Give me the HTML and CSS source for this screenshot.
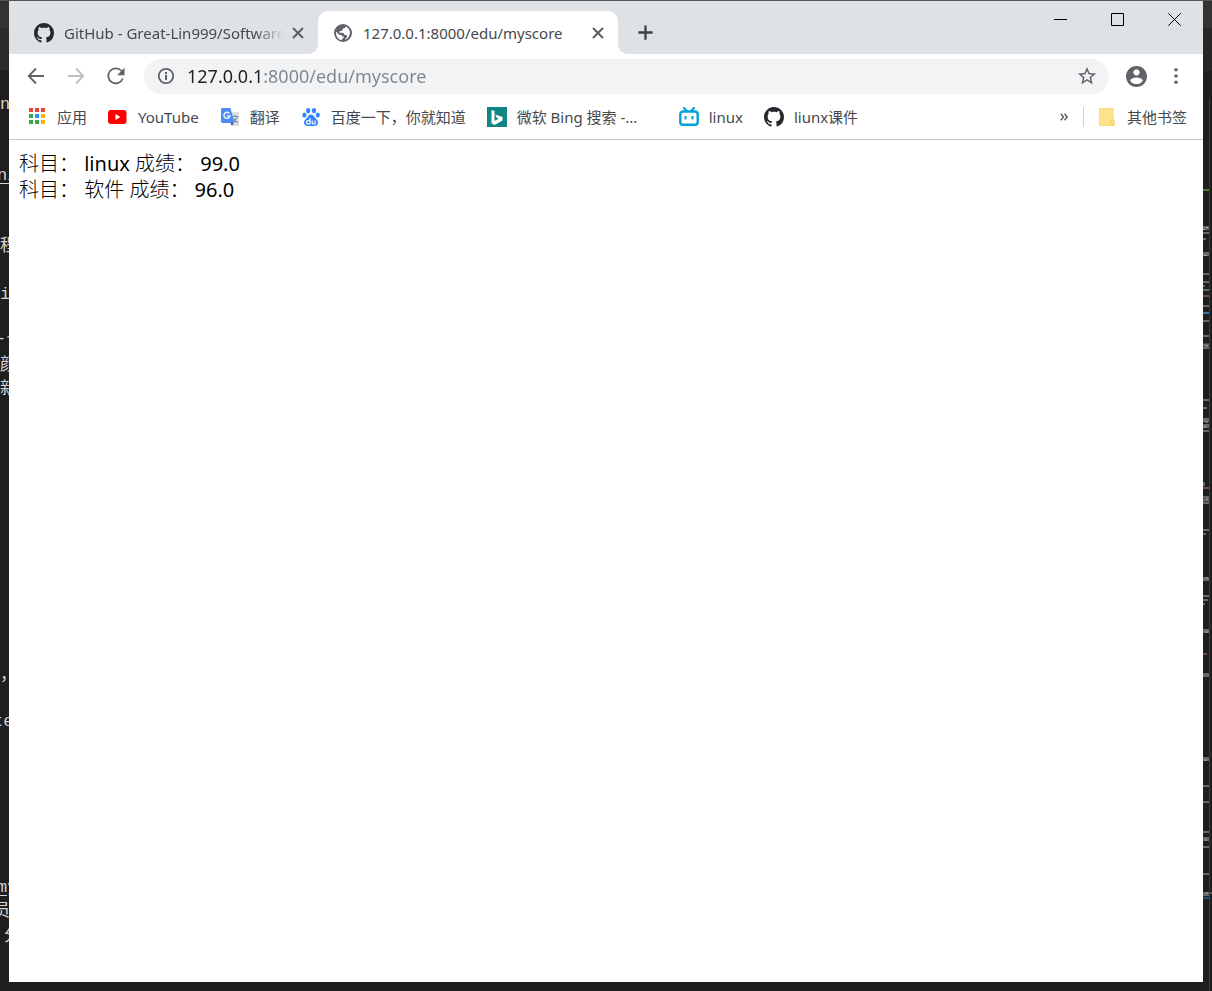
FILE: index.html
```
<!DOCTYPE html>
<html lang="zh-CN">
<head>
<meta charset="utf-8">
<title>127.0.0.1:8000/edu/myscore</title>
<link rel="stylesheet" href="styles.css">
</head>
<body>
<svg class="symbols" aria-hidden="true">
  <symbol id="github" viewBox="0 0 16 16"><path d="M8 0C3.58 0 0 3.58 0 8c0 3.54 2.29 6.53 5.47 7.59.4.07.55-.17.55-.38 0-.19-.01-.82-.01-1.49-2.01.37-2.53-.49-2.69-.94-.09-.23-.48-.94-.82-1.13-.28-.15-.68-.52-.01-.53.63-.01 1.08.58 1.23.82.72 1.21 1.87.87 2.33.66.07-.52.28-.87.51-1.07-1.78-.2-3.64-.89-3.64-3.95 0-.87.31-1.59.82-2.15-.08-.2-.36-1.02.08-2.12 0 0 .67-.21 2.2.82.64-.18 1.32-.27 2-.27.68 0 1.36.09 2 .27 1.53-1.04 2.2-.82 2.2-.82.44 1.1.16 1.92.08 2.12.51.56.82 1.27.82 2.15 0 3.07-1.87 3.75-3.65 3.95.29.25.54.73.54 1.48 0 1.07-.01 1.93-.01 2.2 0 .21.15.46.55.38A8.013 8.013 0 0016 8c0-4.42-3.58-8-8-8z"/></symbol>
  <symbol id="cross" viewBox="0 0 20 20"><path d="M5 5l10 10M15 5L5 15" fill="none" stroke="currentColor" stroke-width="1.900"/></symbol>
</svg>

<div class="editor" aria-hidden="true">
  <div class="code">
    <span class="line" style="top:93px">n</span>
    <span class="line link" style="top:164px">n/</span>
    <span class="line" style="top:235px">程</span>
    <span class="line" style="top:283px">i</span>
    <span class="line dashes" style="top:327px">-~</span>
    <span class="line" style="top:354px">颜</span>
    <span class="line" style="top:378px">新</span>
    <span class="line" style="top:664px">，</span>
    <span class="line shifted" style="top:710px">te</span>
    <span class="line link" style="top:876px">my</span>
    <span class="line shifted" style="top:900px">员</span>
    <span class="line indented" style="top:925px">分</span>
  </div>
  <svg class="minimap" viewBox="0 0 9 991" width="9" height="991">
    <path d="M0 0h9v27H0z" fill="#333"/><path d="M0 27h9v43H0z" fill="#262626"/>
    <path d="M6.500 98v893" stroke="#3a3a3a"/>
    <g fill="none" stroke="#686868">
      <path d="M0 227h6M0 253h6M0 483h2M0 419h6M0 425h6M0 578h6M0 630h6M0 674h6M0 758h6M0 838h6M0 893h6" stroke-width="4"/>
      <path d="M0 232h6M0 238h3M0 273h6M0 281h6M0 285h2M0 289h6M0 305h6M0 320h6M0 335h6M0 347h6M0 399h6M0 407h4M0 430h6M0 496h6M0 502h6M0 529h6M0 533h3M0 595h6M0 599h5M0 603h2M0 785h6M0 801h6M0 831h6M0 846h6M0 873h6" stroke-width="2"/>
      <path d="M0 344h6M0 499h6" stroke-width="3"/>
      <path d="M0 228.500h2M3 226.500h2M1 254.500h3M2 421h3M1 426h2M3 577h2M2 631h3M1 759h3M2 839h2M3 892h2M2 345h3M3 498h2" stroke="#aaa"/>
    </g>
    <path d="M0 189h6" stroke="#4d7a38" stroke-width="2"/>
    <path d="M0 295h6M0 487h6M0 653h4" stroke="#7c4a3e" stroke-width="2"/>
    <path d="M0 312h6" stroke="#3374a8" stroke-width="2"/><path d="M0 897h6" stroke="#264f78" stroke-width="2"/>
    <path d="M7 892h2" stroke="#999"/>
  </svg>
</div>

<div class="window">
  <header class="tabstrip">
    <nav class="tabs" aria-label="标签页">
      <div class="tab">
        <svg class="icon ghost"><use href="#github"/></svg>
        <a class="tab-title faded" href="#">GitHub - Great-Lin999/Software</a>
        <button class="tab-close" aria-label="关闭 GitHub"><svg class="icon"><use href="#cross"/></svg></button>
      </div>
      <div class="tab active">
        <svg class="icon" viewBox="2 2 20 20"><path fill="#5f6368" d="M12 3a9 9 0 1 0 0 18 9 9 0 0 0 0-18zm-1 16.200C7.500 18.700 5 15.700 5 12l.2-1.300L8.500 14H11v1.500h1.800v1.300L11 18zM17.200 16.500c-1 1.300-2.200 2-3.500 2.400l2.300-3.100c.5-.7 0-1.800-.9-1.800h-1.600c-.3-1.500-1.200-2.300-2.700-2.300H8.300c0-1.200.8-1.900 2-1.900.9 0 1.400-.5 1.400-1.400 0-.8.5-1.200 1.300-1.200 1 0 1.600-.8 1.600-1.700 4.600 1.800 5.700 7.300 2.600 11z"/></svg>
        <a class="tab-title" href="#page">127.0.0.1:8000/edu/myscore</a>
        <button class="tab-close" aria-label="关闭标签页"><svg class="icon"><use href="#cross"/></svg></button>
      </div>
      <button class="new-tab" aria-label="新标签页"><svg class="icon" viewBox="0 0 20 20"><path d="M10 2.500v15M2.500 10h15" stroke="#3c4043" stroke-width="2.400"/></svg></button>
    </nav>
    <div class="controls">
      <button aria-label="最小化"><svg width="13" height="13"><path d="M0 6.500h13" stroke="#000"/></svg></button>
      <button aria-label="最大化"><svg width="13" height="13"><path d="M.5.5h12v12H.5z" fill="none" stroke="#000"/></svg></button>
      <button aria-label="关闭"><svg width="13" height="13"><path d="M.3.3l12.400 12.400M12.700.3L.3 12.700" stroke="#000"/></svg></button>
    </div>
  </header>

  <div class="toolbar">
    <button class="tool" aria-label="后退"><svg class="icon" viewBox="0 0 20 20"><path d="M18 10H3M10 2.500L2.700 10l7.300 7.500" fill="none" stroke="#5f6368" stroke-width="1.800"/></svg></button>
    <button class="tool" aria-label="前进" disabled><svg class="icon" viewBox="0 0 20 20"><path d="M2 10h15M10 2.500l7.300 7.500-7.300 7.500" fill="none" stroke="#bbbdbf" stroke-width="1.800"/></svg></button>
    <button class="tool" aria-label="重新加载"><svg class="icon" viewBox="0 0 20 20"><path d="M16.800 12.500A7.500 7.500 0 1 1 15.500 5" fill="none" stroke="#5f6368" stroke-width="1.800"/><path fill="#5f6368" d="M18.500 1.800v7.400h-7.400z"/></svg></button>
    <div class="omnibox">
      <svg class="icon" viewBox="0 0 20 20"><circle cx="10" cy="10" r="7.200" fill="none" stroke="#5f6368" stroke-width="1.800"/><path d="M10 9v5M10 6v2" stroke="#5f6368" stroke-width="2"/></svg>
      <input class="url" type="text" aria-label="地址栏" value="127.0.0.1:8000/edu/myscore" spellcheck="false">
      <button class="star" aria-label="为此网页添加书签"><svg class="icon" viewBox="1 1 22 22"><path fill="#5f6368" d="M22 9.240l-7.190-.62L12 2 9.190 8.630 2 9.240l5.460 4.730L5.820 21 12 17.270 18.180 21l-1.630-7.030L22 9.240zM12 15.400l-3.760 2.270 1-4.280-3.320-2.880 4.380-.38L12 6.100l1.710 4.040 4.380.38-3.320 2.880 1 4.280L12 15.400z"/></svg></button>
    </div>
    <button class="tool" aria-label="用户"><svg class="avatar" viewBox="2 2 20 20"><path fill="#5f6368" d="M12 2C6.480 2 2 6.480 2 12s4.480 10 10 10 10-4.480 10-10S17.520 2 12 2zm0 3c1.660 0 3 1.340 3 3s-1.340 3-3 3-3-1.340-3-3 1.340-3 3-3zm0 14.200c-2.500 0-4.710-1.280-6-3.220.03-1.990 4-3.080 6-3.080 1.990 0 5.970 1.090 6 3.080-1.290 1.940-3.500 3.220-6 3.220z"/></svg></button>
    <button class="tool" aria-label="菜单"><svg class="icon" viewBox="0 0 20 20" fill="#5f6368"><circle cx="10" cy="3.800" r="1.800"/><circle cx="10" cy="10" r="1.800"/><circle cx="10" cy="16.200" r="1.800"/></svg></button>
  </div>

  <nav class="bookmarks" aria-label="书签栏">
    <a href="#"><svg class="icon" viewBox="0 0 20 20"><path fill="#ea4335" d="M2 1h4v4H2zM8 1h4v4H8zM14 1h4v4h-4z"/><path fill="#34a853" d="M2 7h4v4H2zM2 13h4v4H2zM8 13h4v4H8z"/><path fill="#2196f3" d="M8 7h4v4H8z"/><path fill="#fbb40b" d="M14 7h4v4h-4zM14 13h4v4h-4z"/></svg><span>应用</span></a>
    <a href="#"><svg class="icon" viewBox="0 0 20 20"><rect x="0" y="3" width="18.500" height="14" rx="3" fill="#f00"/><path d="M7.500 7l5 3-5 3z" fill="#fff"/></svg><span>YouTube</span></a>
    <a href="#"><svg class="icon" viewBox="0 0 20 20"><path d="M9 5h10v14h-7z" fill="#dedede"/><path d="M12 9.500h6M15 8v2M17 10c-.5 3-2.500 4.500-4 5.500M13.500 11.500c1 2 2.500 3 4 4" fill="none" stroke="#78909c" stroke-width="1.200"/><path d="M10 15h4l-2 4z" fill="#3949ab"/><path d="M2.500 1h8l4 15H2.500c-1 0-1.500-1-1.500-2V2.500C1 1.500 1.500 1 2.500 1z" fill="#4c8bf5"/><path d="M9.300 6.400a3 3 0 1 0 .6 2.600H7.300" fill="none" stroke="#e8f0fe" stroke-width="1.500"/></svg><span>翻译</span></a>
    <a href="#"><svg class="icon" viewBox="0 0 20 20" fill="#3385ff"><ellipse cx="7.200" cy="3.600" rx="2.100" ry="2.700"/><ellipse cx="13" cy="3.600" rx="2.100" ry="2.700"/><ellipse cx="3.400" cy="8" rx="2.100" ry="2.600"/><ellipse cx="16.800" cy="8" rx="2.100" ry="2.600"/><path d="M10 7.500c2 0 2.800 1.800 4 3.200s3 2.400 3 4.800-1.500 3.500-3.500 3.500h-7C4.500 19 3 17.800 3 15.500s1.800-3.400 3-4.800 2-3.200 4-3.200z"/><path d="M9 11v6H7.200a1.500 1.500 0 0 1 0-3.400H9M11.200 13.400v2.300c0 1 .6 1.300 1.200 1.300H14v-3.600" fill="none" stroke="#fff" stroke-width="1.200"/></svg><span>百度一下，你就知道</span></a>
    <a class="wide" href="#"><svg class="icon" viewBox="0 0 20 20"><path fill="#108684" d="M0 0h20v20H0z"/><path fill="#fff" d="M4.500 3l3 1.100v10l4.200-2.400-2.100-1-1.300-3.200 7.200 2.500v3.600L7.500 18l-3-1.700z"/></svg><span>微软 Bing 搜索 -...</span></a>
    <a href="#"><svg class="icon" viewBox="0 0 20 20"><path d="M5 1l3 3M15 1l-3 3" stroke="#00a1d6" stroke-width="2.200" stroke-linecap="round"/><rect x="1.300" y="4.500" width="17.400" height="13.300" rx="2.700" fill="none" stroke="#00a1d6" stroke-width="2.400"/><path d="M6.500 9v3.500M13.500 9v3.500" stroke="#00a1d6" stroke-width="2"/></svg><span>linux</span></a>
    <a href="#"><svg class="icon ghost"><use href="#github"/></svg><span>liunx课件</span></a>
    <div class="bookmarks-end">
      <button class="more" aria-label="更多书签"><svg width="8" height="8"><path d="M.8.7L3.500 4 .8 7.300M4.500.7L7.200 4 4.500 7.300" fill="none" stroke="#5f6368" stroke-width="1.500"/></svg></button>
      <a class="other" href="#"><svg class="icon" viewBox="0 0 20 20"><path d="M2.500 1.500h13.500v12.500h1v4.500h-14.500z" fill="#ffe38c" stroke="#fadb70"/><rect x="14" y="12.500" width="3" height="5.500" rx="1.500" fill="#ffe38c" stroke="#f7cc4f"/></svg><span>其他书签</span></a>
    </div>
  </nav>

  <main class="page" id="page">科目： linux 成绩： 99.0<br>科目： 软件 成绩： 96.0</main>
</div>
</body>
</html>
```
FILE: styles.css
```
* { box-sizing: border-box; }

body {
  position: relative;
  display: flex;
  min-height: 100vh;
  margin: 0;
  padding: 1px 9px 9px;
  overflow: hidden;
  background: #1e1e1e;
  font: 15px/20px "Noto Sans", "Noto Sans CJK SC", sans-serif;
  color: #45494d;
}

button {
  display: flex;
  align-items: center;
  justify-content: center;
  margin: 0;
  padding: 0;
  border: 0;
  background: none;
  color: inherit;
}

a { color: inherit; text-decoration: none; }
svg { display: block; flex: none; }
.symbols { position: absolute; width: 0; height: 0; }
.icon { width: 20px; height: 20px; }
.ghost { fill: #24292e; }

/* Editor visible behind the browser window */
.editor {
  position: absolute;
  inset: 0;
  display: flex;
  justify-content: space-between;
  overflow: hidden;
  border-top: 1px solid #555;
}
.code {
  position: relative;
  width: 9px;
  background: linear-gradient(#333 27px, #2b2b2b 27px, #2b2b2b 69px, #1e1e1e 69px);
}
.line {
  position: absolute;
  left: 0;
  font: 17px/22px "Liberation Mono", "Noto Sans CJK SC", monospace;
  color: #d4d4d4;
  white-space: nowrap;
}
.link { text-decoration: underline; text-underline-offset: 3px; }
.line.link { left: -3px; }
.dashes { left: -4px; }
.shifted { left: -7px; }
.indented { left: 4px; }

.window {
  position: relative;
  display: flex;
  flex: 1;
  flex-direction: column;
  min-width: 0;
  background: #fff;
}

/* Tabs */
.tabstrip {
  display: flex;
  justify-content: space-between;
  height: 53px;
  background: #dee1e6;
}
.tabs { display: flex; align-items: flex-end; padding-left: 9px; }
.tab {
  position: relative;
  display: flex;
  align-items: center;
  gap: 10px;
  width: 300px;
  height: 43px;
  padding: 0 10px 0 16px;
}
.tab.active {
  padding-left: 15px;
  border-radius: 10px 10px 0 0;
  background: #fff;
}
.active::before, .active::after {
  content: "";
  position: absolute;
  bottom: 0;
  width: 10px;
  height: 10px;
}
.active::before { right: 100%; background: radial-gradient(circle at 0 0, #dee1e6 10px, #fff 10px); }
.active::after { left: 100%; background: radial-gradient(circle at 100% 0, #dee1e6 10px, #fff 10px); }
.tab-title { flex: 1; overflow: hidden; white-space: nowrap; }
.faded { mask-image: linear-gradient(to right, #000 calc(100% - 30px), transparent); }
.tab-close { margin-left: -6px; color: #5a5d61; }
.new-tab { width: 54px; height: 43px; }
.new-tab .icon { width: 19px; height: 19px; }
.controls { display: flex; }
.controls button { width: 57px; height: 37px; }

/* Toolbar */
.toolbar {
  display: flex;
  align-items: center;
  height: 44px;
  padding: 0 7px;
}
.tool { width: 40px; height: 40px; }
.avatar { width: 21px; height: 21px; }
.omnibox {
  display: flex;
  flex: 1;
  align-items: center;
  gap: 11px;
  height: 35px;
  margin: 0 7px 0 8px;
  padding: 0 12px;
  border-radius: 18px;
  background: #f1f3f4;
}
.url {
  flex: 1;
  min-width: 0;
  padding: 0;
  border: 0;
  outline: 0;
  background: linear-gradient(to right, #202124 74px, #80868b 74px);
  background-clip: text;
  -webkit-background-clip: text;
  color: transparent;
  font: 18px/26px "Noto Sans", sans-serif;
}

/* Bookmarks */
.bookmarks {
  display: flex;
  align-items: center;
  gap: 21px;
  height: 42px;
  padding: 0 16px 4px 18px;
  border-bottom: 1px solid #c4c5c7;
  white-space: nowrap;
}
.bookmarks a { display: flex; align-items: center; gap: 10px; }
.bookmarks .wide { width: 171px; }
.bookmarks-end { display: flex; align-items: center; margin-left: auto; }
.more {
  width: 38px;
  height: 20px;
  border-right: 1px solid #cfd1d4;
}
.bookmarks .other { padding-left: 13px; }

.page {
  flex: 1;
  padding: 11px 10px;
  font-family: "Noto Sans", "Noto Sans CJK SC Light", "Noto Sans CJK SC", sans-serif;
  font-size: 20px;
  line-height: 26px;
  color: #000;
}
```
